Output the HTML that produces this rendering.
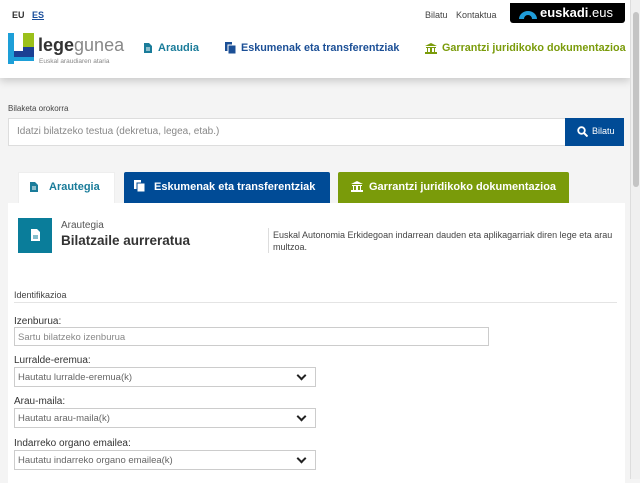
<!DOCTYPE html>
<html><head><meta charset="utf-8"><style>
*{box-sizing:border-box;margin:0;padding:0}
body{width:640px;height:479px;overflow:hidden;background:#f4f4f4;font-family:"Liberation Sans",sans-serif;position:relative;color:#333}
.a{position:absolute}
.hdr{left:0;top:0;width:630px;height:78px;background:#fff;box-shadow:0 3px 8px rgba(0,0,0,.18)}
.sb{left:630px;top:0;width:10px;height:479px;background:#f0f0f0;border-left:1px solid #ddd}
.sb i{position:absolute;left:2px;top:12px;width:6px;height:175px;background:#c4c4c4;border-radius:3px}
.t{white-space:nowrap}
.inp,.sel{border:1px solid #ccc;background:#fff;font-size:9.5px;color:#666;padding:4px 0 0 3px}
.lbl{font-size:10px;color:#333}
.sel:after{content:"";position:absolute;right:10px;top:4px;width:5px;height:5px;border-right:2px solid #222;border-bottom:2px solid #222;transform:rotate(45deg)}
</style></head><body>
<div class="a" style="left:0;top:0;width:640px;height:3px;background:#000"></div>
<div class="a hdr"></div>
<div class="a t" style="left:12px;top:10px;font-size:9px;font-weight:bold">EU</div>
<div class="a t" style="left:32px;top:10px;font-size:9px;font-weight:bold;color:#1a4f9c;text-decoration:underline">ES</div>
<div class="a t" style="left:425px;top:10px;font-size:9px;color:#444">Bilatu</div>
<div class="a t" style="left:456px;top:10px;font-size:9px;color:#444">Kontaktua</div>
<div class="a" style="left:510px;top:3px;width:115px;height:20px;background:#000;border-radius:0 0 3px 3px"></div>
<svg class="a" style="left:518px;top:9px" width="20" height="10"><path d="M1 10 A9 8 0 0 1 19 10 L14 10 A4 4 0 0 0 6 10Z" fill="#1f9cd8"/></svg>
<div class="a t" style="left:540px;top:5px;font-size:13px;color:#fff"><b>euskadi</b>.eus</div>
<!-- logo -->
<div class="a" style="left:8px;top:33px;width:26px;height:28px;background:#1d9fd8"></div>
<div class="a" style="left:14px;top:33px;width:20px;height:24px;background:#1b3f93"></div>
<div class="a" style="left:23px;top:33px;width:11px;height:14px;background:#9bc01a"></div>
<div class="a" style="left:14px;top:33px;width:9px;height:18px;background:#fff"></div>
<div class="a" style="left:8px;top:58px;width:6px;height:6px;background:#1d9fd8"></div>
<div class="a t" style="left:38px;top:35px;font-size:18px;color:#333"><b>lege</b><span style="color:#888">gunea</span></div>
<div class="a t" style="left:39px;top:58px;font-size:6.5px;color:#888">Euskal araudiaren ataria</div>
<!-- nav -->
<svg class="a" style="left:144px;top:43px" width="8" height="10"><path d="M0 0H5L8 3V10H0Z" fill="#1a7c9a"/><path d="M2 5H6M2 7H6" stroke="#fff"/></svg>
<div class="a t" style="left:158px;top:42px;font-size:11px;font-weight:bold;color:#1a7c9a">Araudia</div>
<svg class="a" style="left:225px;top:42px" width="11" height="12"><rect x="0" y="0" width="7" height="9" fill="#1b4f96"/><rect x="3" y="3" width="8" height="9" fill="#1b4f96" stroke="#fff"/></svg>
<div class="a t" style="left:241px;top:42px;font-size:10.8px;font-weight:bold;color:#1b4f96">Eskumenak eta transferentziak</div>
<svg class="a" style="left:425px;top:43px" width="12" height="11"><path d="M0 3L6 0L12 3ZM1 4H11V5H1ZM2 5H3V9H2ZM5 5H7V9H5ZM9 5H10V9H9ZM0 9H12V11H0Z" fill="#7a9b0a"/></svg>
<div class="a t" style="left:442px;top:42px;font-size:10.8px;font-weight:bold;color:#7a9b0a">Garrantzi juridikoko dokumentazioa</div>
<!-- search -->
<div class="a t" style="left:8px;top:104px;font-size:8px;color:#444">Bilaketa orokorra</div>
<div class="a" style="left:8px;top:118px;width:558px;height:28px;background:#fff;border:1px solid #ddd"></div>
<div class="a t" style="left:17px;top:126px;font-size:10px;color:#888">Idatzi bilatzeko testua (dekretua, legea, etab.)</div>
<div class="a" style="left:565px;top:118px;width:59px;height:28px;background:#004b96"></div>
<svg class="a" style="left:577px;top:126px" width="11" height="11"><circle cx="4.5" cy="4.5" r="3.3" stroke="#fff" stroke-width="1.8" fill="none"/><path d="M7 7L10.5 10.5" stroke="#fff" stroke-width="2"/></svg>
<div class="a t" style="left:592px;top:126px;font-size:9px;color:#fff">Bilatu</div>
<!-- tabs -->
<div class="a" style="left:18px;top:172px;width:97px;height:33px;background:#fff;border:1px solid #eee;border-bottom:none"></div>
<svg class="a" style="left:30px;top:182px" width="8" height="10"><path d="M0 0H5L8 3V10H0Z" fill="#1a7c9a"/><path d="M2 5H6M2 7H6" stroke="#fff"/></svg>
<div class="a t" style="left:49px;top:181px;font-size:11px;font-weight:bold;color:#1a7c9a">Arautegia</div>
<div class="a" style="left:124px;top:172px;width:206px;height:31px;background:#004b96;border-radius:2px 2px 0 0"></div>
<svg class="a" style="left:134px;top:180px" width="11" height="12"><rect x="0" y="0" width="7" height="9" fill="#fff"/><rect x="3" y="3" width="8" height="9" fill="#fff" stroke="#004b96"/></svg>
<div class="a t" style="left:154px;top:181px;font-size:11px;font-weight:bold;color:#fff">Eskumenak eta transferentziak</div>
<div class="a" style="left:338px;top:172px;width:231px;height:31px;background:#7a9b0a;border-radius:2px 2px 0 0"></div>
<svg class="a" style="left:351px;top:181px" width="12" height="11"><path d="M0 3L6 0L12 3ZM1 4H11V5H1ZM2 5H3V9H2ZM5 5H7V9H5ZM9 5H10V9H9ZM0 9H12V11H0Z" fill="#fff"/></svg>
<div class="a t" style="left:369px;top:181px;font-size:11px;font-weight:bold;color:#fff">Garrantzi juridikoko dokumentazioa</div>
<!-- panel -->
<div class="a" style="left:8px;top:203px;width:617px;height:280px;background:#fff"></div>
<div class="a" style="left:18px;top:218px;width:34px;height:35px;background:#0a7d9a"></div>
<svg class="a" style="left:31px;top:229px" width="9" height="12"><path d="M0 0H6L9 3V12H0Z" fill="#fff"/><path d="M2 7H7M2 9H7" stroke="#0a7d9a"/></svg>
<div class="a t" style="left:61px;top:220px;font-size:10px;color:#555">Arautegia</div>
<div class="a t" style="left:61px;top:233px;font-size:13.5px;font-weight:bold;color:#333">Bilatzaile aurreratua</div>
<div class="a" style="left:268px;top:228px;width:1px;height:25px;background:#ddd"></div>
<div class="a" style="left:273px;top:229px;font-size:9px;line-height:12px;color:#444"><span class="t">Euskal Autonomia Erkidegoan indarrean dauden eta aplikagarriak diren lege eta arau</span><br>multzoa.</div>
<div class="a t" style="left:14px;top:290px;font-size:9px;color:#444">Identifikazioa</div>
<div class="a" style="left:14px;top:302px;width:603px;height:1px;background:#e4e4e4"></div>
<div class="a t lbl" style="left:14px;top:316px">Izenburua:</div>
<div class="a inp" style="left:14px;top:327px;width:475px;height:19px;color:#888">Sartu bilatzeko izenburua</div>
<div class="a t lbl" style="left:14px;top:355px">Lurralde-eremua:</div>
<div class="a sel" style="left:14px;top:367px;width:302px;height:20px">Hautatu lurralde-eremua(k)</div>
<div class="a t lbl" style="left:14px;top:396px">Arau-maila:</div>
<div class="a sel" style="left:14px;top:408px;width:302px;height:20px">Hautatu arau-maila(k)</div>
<div class="a t lbl" style="left:14px;top:438px">Indarreko organo emailea:</div>
<div class="a sel" style="left:14px;top:450px;width:302px;height:20px">Hautatu indarreko organo emailea(k)</div>
<div class="a sb"><i></i></div>
</body></html>
